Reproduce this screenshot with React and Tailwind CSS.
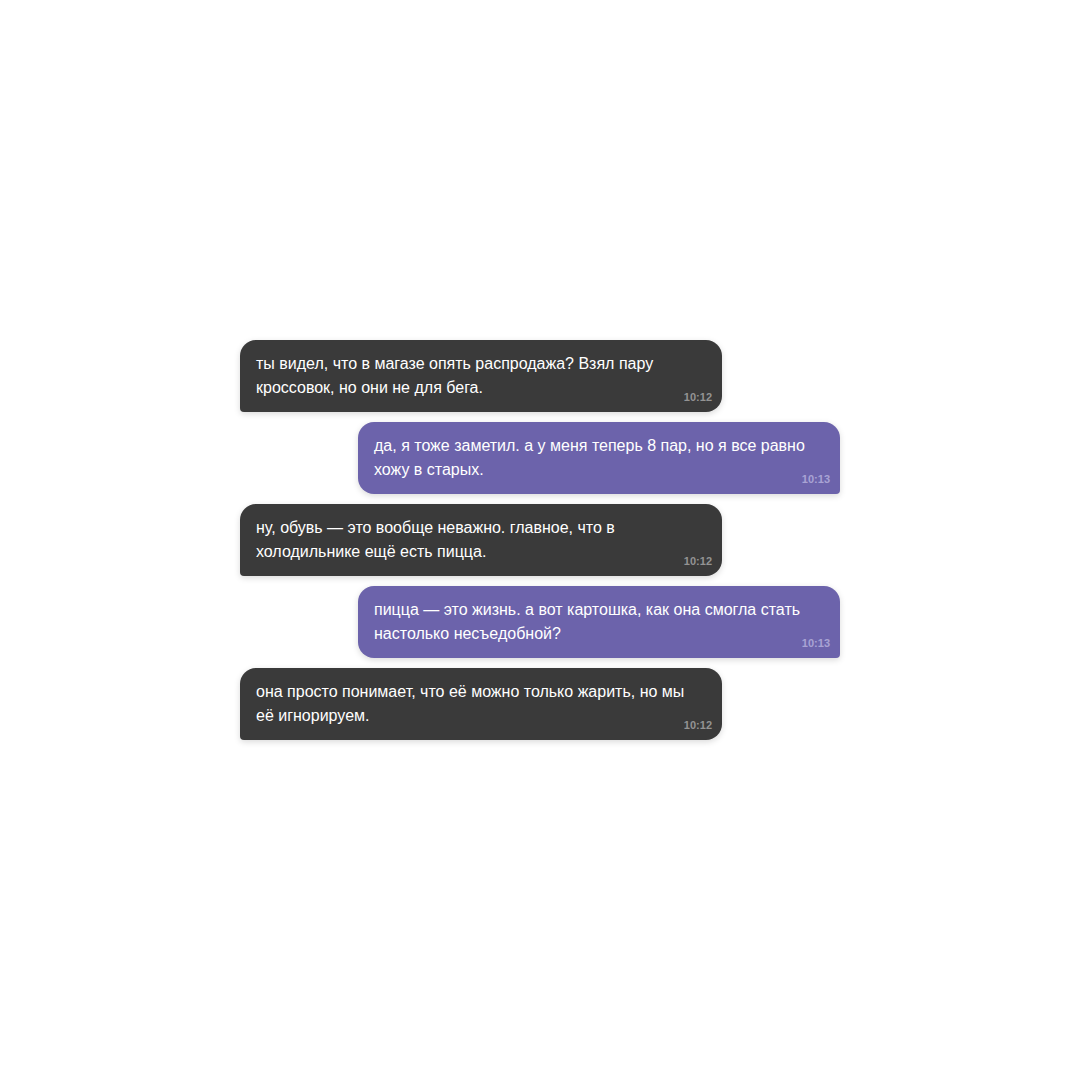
const messages = [
  {
    id: 1,
    mine: false,
    text: "ты видел, что в магазе опять распродажа? Взял пару кроссовок, но они не для бега.",
    time: "10:12",
  },
  {
    id: 2,
    mine: true,
    text: "да, я тоже заметил. а у меня теперь 8 пар, но я все равно хожу в старых.",
    time: "10:13",
  },
  {
    id: 3,
    mine: false,
    text: "ну, обувь — это вообще неважно. главное, что в холодильнике ещё есть пицца.",
    time: "10:12",
  },
  {
    id: 4,
    mine: true,
    text: "пицца — это жизнь. а вот картошка, как она смогла стать настолько несъедобной?",
    time: "10:13",
  },
  {
    id: 5,
    mine: false,
    text: "она просто понимает, что её можно только жарить, но мы её игнорируем.",
    time: "10:12",
  },
];

const App = () => {
  return (
    <div className="w-full min-h-screen bg-white flex items-center justify-center font-['Liberation_Sans',Arial,sans-serif]">
      <div className="w-[600px] flex flex-col gap-[10px]">
        {messages.map((msg) => (
          <div
            key={msg.id}
            className={`flex ${msg.mine ? "justify-end" : "justify-start"}`}
          >
            <div
              className={
                msg.mine
                  ? "relative w-[482px] min-h-[72px] bg-[#6c63ab] text-white rounded-2xl rounded-br-[4px] px-4 pt-3 pb-3 shadow-[0_2px_6px_rgba(0,0,0,0.15)]"
                  : "relative w-[482px] min-h-[72px] bg-[#3a3a3a] text-white rounded-2xl rounded-bl-[4px] px-4 pt-3 pb-3 shadow-[0_2px_6px_rgba(0,0,0,0.15)]"
              }
            >
              <p className="text-[16px] leading-6">{msg.text}</p>
              <span
                className={
                  msg.mine
                    ? "absolute right-[10px] bottom-[9px] text-[11px] font-bold leading-none text-[#a9a3d4]"
                    : "absolute right-[10px] bottom-[9px] text-[11px] font-bold leading-none text-[#939393]"
                }
              >
                {msg.time}
              </span>
            </div>
          </div>
        ))}
      </div>
    </div>
  );
};

export default App;
